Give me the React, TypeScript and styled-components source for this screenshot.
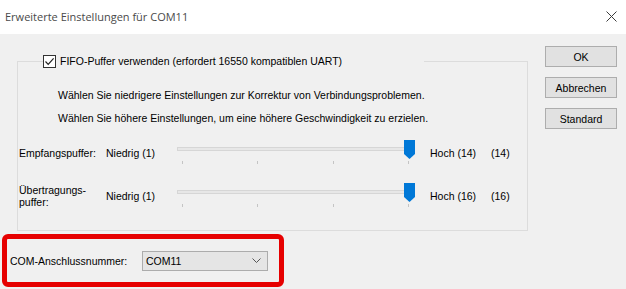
import React from 'react';
import styled, { createGlobalStyle } from 'styled-components';

const GlobalStyle = createGlobalStyle`
    html, body {
        margin: 0;
        padding: 0;
        background: #f0f0f0;
    }
    body {
        font-family: "Liberation Sans", Arial, sans-serif;
        font-size: 10.5px;
        color: #000000;
    }
`;

export const Dialog = styled.div`
    width: 626px;
    height: 289px;
    display: flex;
    flex-direction: column;
    overflow: hidden;
    background: #f0f0f0;
`;

export const TitleBar = styled.div`
    height: 34px;
    flex: none;
    background: #ffffff;
    display: flex;
    align-items: center;
    justify-content: space-between;
    padding: 0 9px 0 5px;
`;

export const TitleText = styled.span`
    font-family: "Open Sans", "Noto Sans", sans-serif;
    font-size: 11px;
    color: #4a4a4a;
    margin-top: -2px;
`;

export const CloseIcon = styled.svg`
    width: 11px;
    height: 11px;
    margin-top: -2px;
`;

export const Body = styled.div`
    flex: 1;
    display: flex;
`;

export const LeftCol = styled.div`
    width: 528px;
    display: flex;
    flex-direction: column;
`;

export const Group = styled.fieldset`
    margin: 21px 0 0 17px;
    padding: 0 0 19px 0;
    width: 511px;
    box-sizing: border-box;
    border: 1px solid #dcdcdc;
    min-inline-size: 0;
`;

export const GroupLegend = styled.legend`
    display: flex;
    align-items: center;
    gap: 4px;
    width: 381px;
    height: 13px;
    box-sizing: border-box;
    padding: 0;
    margin-left: 25px;
    line-height: 13px;
`;

export const CheckBox = styled.span`
    width: 13px;
    height: 13px;
    box-sizing: border-box;
    border: 1px solid #333333;
    background: #ffffff;
    display: flex;
    align-items: center;
    justify-content: center;
`;

export const Hint = styled.div<{ $top: number }>`
    margin: ${p => p.$top}px 0 0 40px;
    height: 13px;
    line-height: 13px;
    white-space: nowrap;
`;

export const SliderRow = styled.div<{ $top: number }>`
    margin: ${p => p.$top}px 0 0 1px;
    height: 30px;
    display: grid;
    grid-template-columns: 87px 71px 237px 77px auto;
    align-items: center;
`;

export const RowLabel = styled.div`
    line-height: 12px;
    white-space: nowrap;
`;

export const HighLabel = styled.div`
    margin-left: 16px;
    white-space: nowrap;
`;

export const Slider = styled.div`
    position: relative;
    height: 24px;
    margin-top: -2px;
`;

export const Track = styled.div`
    margin-top: 7px;
    height: 4px;
    box-sizing: border-box;
    border: 1px solid #d6d6d6;
    background: #e7e7e7;
`;

export const Ticks = styled.div`
    margin-top: 10px;
    padding: 0 5px;
    display: flex;
    justify-content: space-between;
`;

export const Tick = styled.span`
    width: 1px;
    height: 3px;
    background: #c4c4c4;
`;

export const Thumb = styled.svg<{ $pos: number }>`
    position: absolute;
    top: 0;
    left: ${p => p.$pos}px;
    width: 11px;
    height: 19px;
`;

export const ComBox = styled.div`
    margin: 3px 0 0 2px;
    width: 282px;
    height: 53px;
    box-sizing: border-box;
    border: 5px solid #e60000;
    border-radius: 6px;
    display: flex;
    align-items: center;
    padding-left: 3px;
`;

export const ComLabel = styled.span`
    width: 132px;
    white-space: nowrap;
`;

export const Combo = styled.div`
    width: 126px;
    height: 20px;
    box-sizing: border-box;
    border: 1px solid #acacac;
    background: #e5e5e5;
    display: flex;
    align-items: center;
    justify-content: space-between;
    padding: 0 6px 0 3px;
`;

export const ButtonCol = styled.div`
    margin-left: 17px;
    padding-top: 12px;
    display: flex;
    flex-direction: column;
    gap: 10px;
`;

export const DlgButton = styled.button`
    width: 72px;
    height: 21px;
    box-sizing: border-box;
    border: 1px solid #adadad;
    background: #e1e1e1;
    font-family: inherit;
    font-size: 10.5px;
    color: #000000;
    padding: 0;
`;

const sliders = [
    { label: ['Empfangspuffer:'], high: 'Hoch (14)', value: '(14)', top: 13 },
    { label: ['Übertragungs-', 'puffer:'], high: 'Hoch (16)', value: '(16)', top: 13 },
];

const App: React.FC = () => {
    return (
        <Dialog>
            <GlobalStyle />
            <TitleBar>
                <TitleText>Erweiterte Einstellungen für COM11</TitleText>
                <CloseIcon viewBox="0 0 11 11">
                    <path d="M0.5 0.5 L10.5 10.5 M10.5 0.5 L0.5 10.5" stroke="#3c3c3c" strokeWidth="1" />
                </CloseIcon>
            </TitleBar>

            <Body>
                <LeftCol>
                    <Group>
                        <GroupLegend>
                            <CheckBox>
                                <svg width="11" height="11" viewBox="0 0 11 11">
                                    <path d="M1.5 5.5 L4.2 8.3 L9.6 2.4" fill="none" stroke="#222" strokeWidth="1.2" />
                                </svg>
                            </CheckBox>
                            <span>FIFO-Puffer verwenden (erfordert 16550 kompatiblen UART)</span>
                        </GroupLegend>

                        <Hint $top={21}>Wählen Sie niedrigere Einstellungen zur Korrektur von Verbindungsproblemen.</Hint>
                        <Hint $top={10}>Wählen Sie höhere Einstellungen, um eine höhere Geschwindigkeit zu erzielen.</Hint>

                        {sliders.map(s => (
                            <SliderRow key={s.value} $top={s.top}>
                                <RowLabel>
                                    {s.label.map(l => <div key={l}>{l}</div>)}
                                </RowLabel>
                                <span>Niedrig (1)</span>
                                <Slider>
                                    <Track />
                                    <Ticks>
                                        <Tick /><Tick /><Tick /><Tick />
                                    </Ticks>
                                    <Thumb $pos={227} viewBox="0 0 11 19">
                                        <path d="M0 0 H11 V14 L5.5 19 L0 14 Z" fill="#0078d7" />
                                    </Thumb>
                                </Slider>
                                <HighLabel>{s.high}</HighLabel>
                                <span>{s.value}</span>
                            </SliderRow>
                        ))}
                    </Group>

                    <ComBox>
                        <ComLabel>COM-Anschlussnummer:</ComLabel>
                        <Combo>
                            <span>COM11</span>
                            <svg width="9" height="5" viewBox="0 0 9 5">
                                <path d="M0.5 0.5 L4.5 4.5 L8.5 0.5" fill="none" stroke="#555" strokeWidth="1" />
                            </svg>
                        </Combo>
                    </ComBox>
                </LeftCol>

                <ButtonCol>
                    <DlgButton>OK</DlgButton>
                    <DlgButton>Abbrechen</DlgButton>
                    <DlgButton>Standard</DlgButton>
                </ButtonCol>
            </Body>
        </Dialog>
    );
};

export default App;
